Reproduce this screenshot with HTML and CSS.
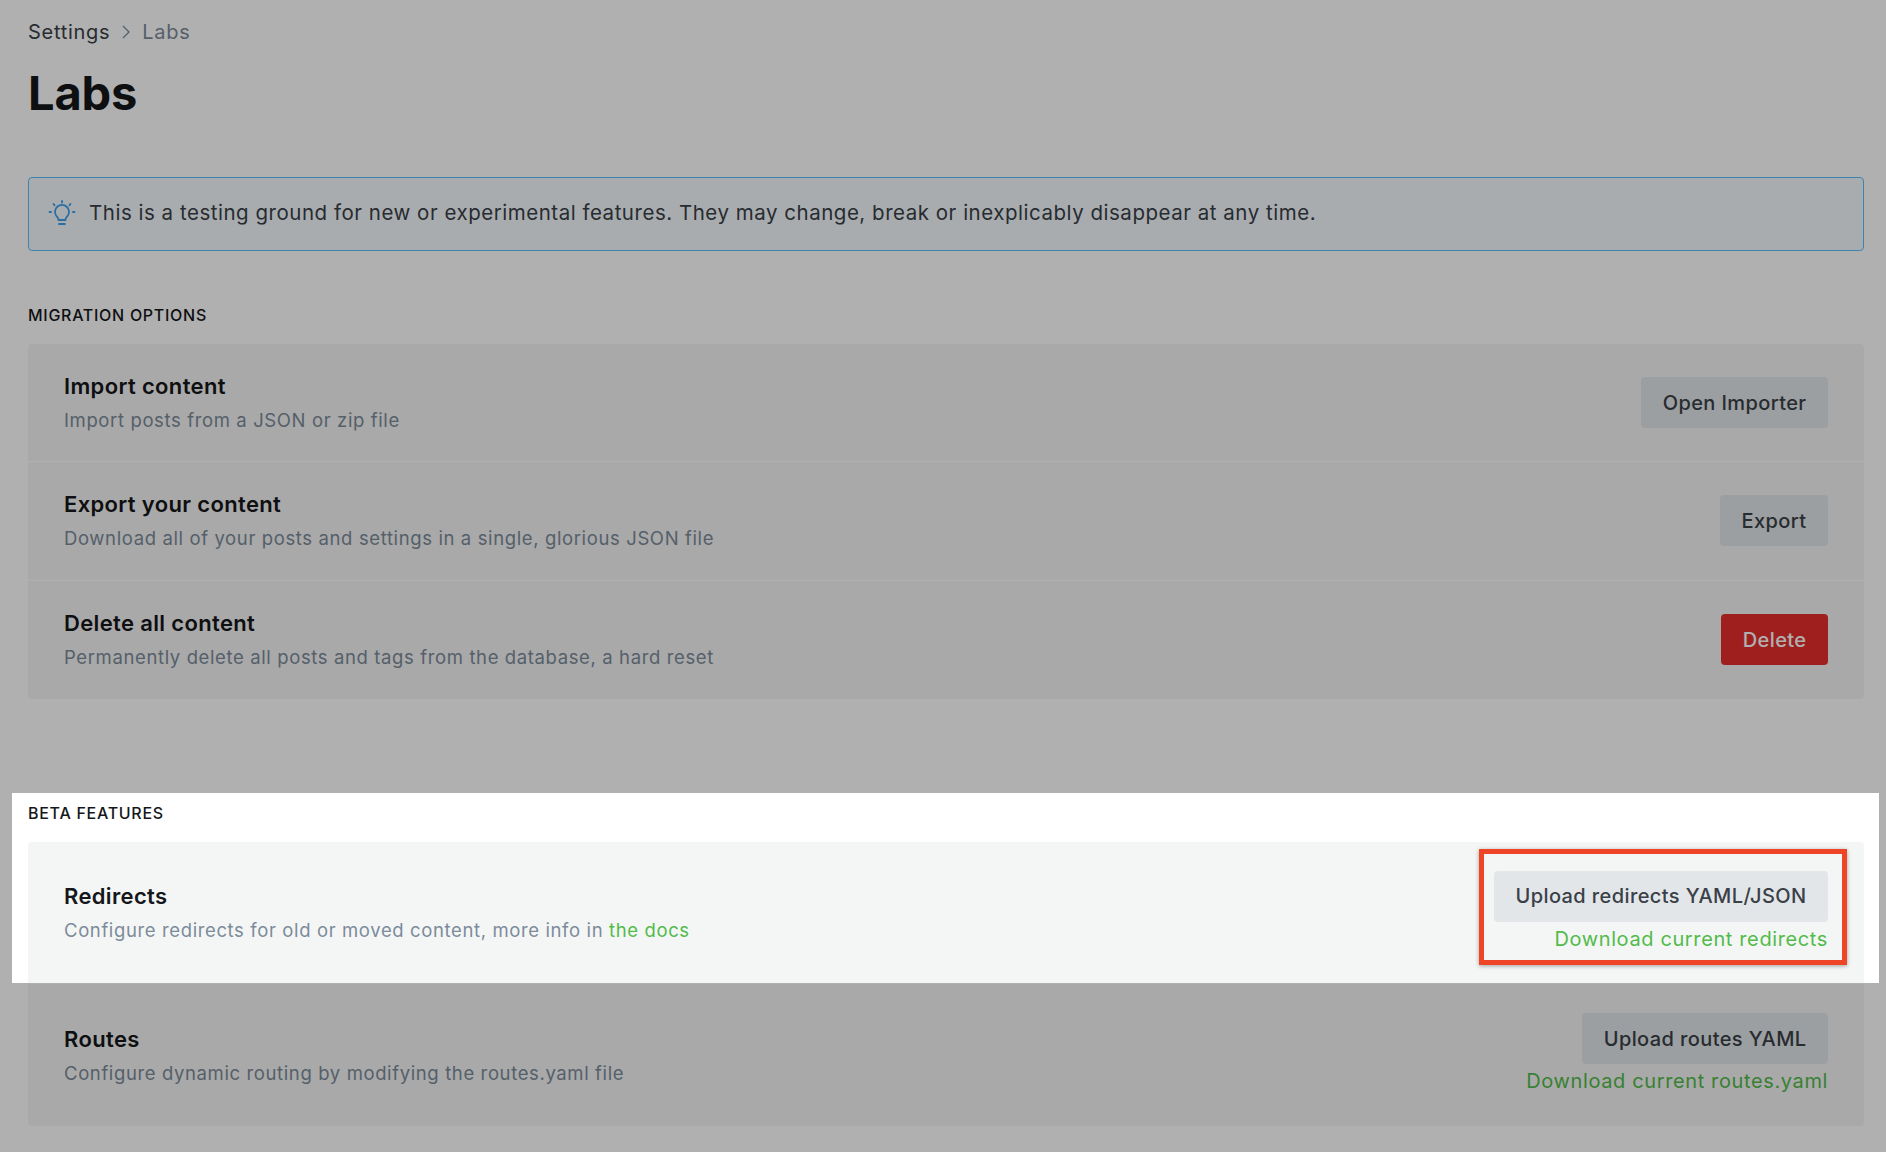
FILE: index.html
```html
<!DOCTYPE html>
<html lang="en">
<head>
<meta charset="utf-8">
<title>Labs</title>
<link rel="stylesheet" href="styles.css">
</head>
<body>
<main class="page">
  <nav class="crumbs">
    <a class="crumb-root">Settings</a>
    <svg class="crumb-sep" viewBox="0 0 10 16" width="10" height="16"><path d="M2 2l6 6-6 6" fill="none" stroke="currentColor" stroke-width="1.3"/></svg>
    <span class="crumb-current">Labs</span>
  </nav>
  <h1 class="title">Labs</h1>

  <div class="alert">
    <svg class="alert-icon" viewBox="0 0 28 28" width="28" height="28" fill="none" stroke="currentColor" stroke-width="1.8" stroke-linecap="round">
      <path d="M10.6 21c-.1-1.700-1-2.600-2-3.700a7 7 0 1 1 10.800 0c-1 1.100-1.900 2-2 3.700z"/>
      <path d="M11 25h6"/>
      <path d="M14 2v1.500M5.500 5l1 1.200M22.500 5l-1 1.200M1.500 13H3M25 13h1.500"/>
    </svg>
    <span>This is a testing ground for new or experimental features. They may change, break or inexplicably disappear at any time.</span>
  </div>

  <section class="group group-migration">
    <h2 class="group-label">MIGRATION OPTIONS</h2>
    <div class="panel">
      <div class="row">
        <div class="row-text"><h3 class="row-title">Import content</h3><p class="row-desc">Import posts from a JSON or zip file</p></div>
        <div class="row-action"><button class="btn">Open Importer</button></div>
      </div>
      <div class="row">
        <div class="row-text"><h3 class="row-title">Export your content</h3><p class="row-desc">Download all of your posts and settings in a single, glorious JSON file</p></div>
        <div class="row-action"><button class="btn">Export</button></div>
      </div>
      <div class="row">
        <div class="row-text"><h3 class="row-title">Delete all content</h3><p class="row-desc">Permanently delete all posts and tags from the database, a hard reset</p></div>
        <div class="row-action"><button class="btn btn-red">Delete</button></div>
      </div>
    </div>
  </section>

  <section class="group group-beta">
    <h2 class="group-label">BETA FEATURES</h2>
    <div class="panel">
      <div class="row row-tall row-lit">
        <div class="row-text"><h3 class="row-title">Redirects</h3><p class="row-desc">Configure redirects for old or moved content, more info in <a class="link">the docs</a></p></div>
        <div class="row-action"><button class="btn">Upload redirects YAML/JSON</button><a class="link link-block">Download current redirects</a></div>
      </div>
      <div class="row row-tall">
        <div class="row-text"><h3 class="row-title">Routes</h3><p class="row-desc">Configure dynamic routing by modifying the routes.yaml file</p></div>
        <div class="row-action"><button class="btn">Upload routes YAML</button><a class="link link-block">Download current routes.yaml</a></div>
      </div>
    </div>
  </section>
</main>
<div class="spotlight"></div>
<div class="callout"></div>
</body>
</html>
```
FILE: styles.css
```css
* { box-sizing: border-box; }
html, body { margin: 0; height: 100%; overflow: hidden; }
body {
  background: #fff;
  font-family: Inter, "Liberation Sans", sans-serif;
  color: #15171a;
}
.page { padding: 0 22px 0 28px; }
.crumbs {
  display: flex;
  align-items: center;
  height: 22px;
  margin-top: 21px;
  font-size: 20px;
  letter-spacing: .72px;
}
.crumb-root { color: #394047; }
.crumb-sep { color: #7c8b9a; margin: 0 11px; }
.crumb-current { color: #7c8b9a; }
.title {
  margin: 20px 0 0;
  font-size: 47px;
  line-height: 60px;
  font-weight: 700;
  letter-spacing: -.2px;
}
.alert {
  display: flex;
  align-items: center;
  gap: 13px;
  height: 74px;
  margin-top: 54px;
  padding: 0 19px 2px 19px;
  background: #f5fafe;
  border: 1.500px solid #5bbdff;
  border-radius: 4px;
  font-size: 20.500px;
  letter-spacing: .52px;
  color: #394047;
}
.alert-icon { color: #3fa0ec; flex: none; }
.alert span { margin-top: -1px; }
.group-label {
  margin: 0 0 19px;
  font-size: 16px;
  line-height: 20px;
  font-weight: 500;
  letter-spacing: .72px;
}
.group-migration { margin-top: 54px; }
.group-beta { margin-top: 104px; }
.panel { background: #f5f5f5; border-radius: 4px; }
.row {
  display: flex;
  align-items: center;
  justify-content: space-between;
  height: 118.330px;
  padding: 0 36px;
  border-bottom: 1px solid #fff;
}
.row:last-child { border-bottom: 0; }
.row-tall { height: 142px; }
.row-tall .row-text { padding-top: 2px; }
.row-lit { background: #f4f6f6; border-radius: 4px 4px 0 0; }
.row-title {
  margin: 0;
  font-size: 22px;
  line-height: 24px;
  font-weight: 600;
  letter-spacing: .35px;
}
.row-desc {
  margin: 10px 0 0;
  font-size: 18.500px;
  line-height: 24px;
  letter-spacing: .62px;
  color: #7c8b9a;
}
.row-action { display: flex; flex-direction: column; align-items: flex-end; }
.btn {
  height: 51px;
  padding: 0 21.500px;
  border: 0;
  border-radius: 4px;
  background: #e3e6e9;
  color: #394047;
  font: 500 20px Inter, "Liberation Sans", sans-serif;
  letter-spacing: .4px;
}
.btn-red { background: #e62d2d; color: #fff; }
.link { color: #52bb4a; }
.link-block { display: block; font-size: 20px; line-height: 34px; margin-bottom: -2px; letter-spacing: .62px; }
.spotlight {
  position: absolute;
  left: 12px;
  top: 793px;
  width: 1867px;
  height: 190px;
  box-shadow: 0 0 0 3000px rgba(0, 0, 0, .31);
}
.callout {
  position: absolute;
  left: 1479px;
  top: 849px;
  width: 368px;
  height: 116px;
  border: 5px solid #ee4527;
  box-shadow: 0 1px 4px rgba(0, 0, 0, .35);
}
```
